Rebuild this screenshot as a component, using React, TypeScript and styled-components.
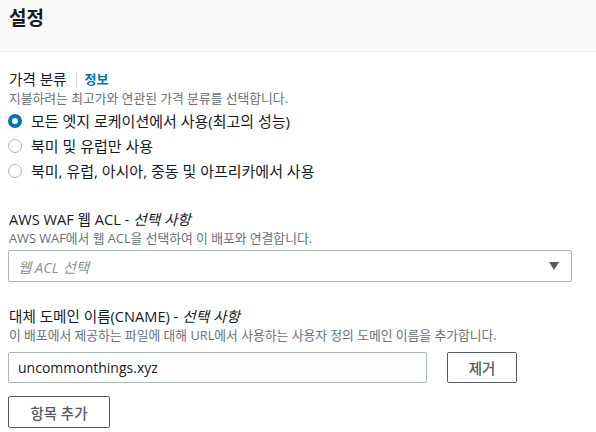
import React, { useState } from "react";
import styled, { createGlobalStyle } from "styled-components";

const GlobalStyle = createGlobalStyle`
  body {
    margin: 0;
    background: #ffffff;
    font-family: "Open Sans", "Noto Sans CJK KR", sans-serif;
    color: #16191f;
  }
`;

const Header = styled.header`
  height: 52px;
  box-sizing: border-box;
  background: #fafafa;
  border-bottom: 1px solid #e9ebed;
  padding: 5px 9px 0;
`;

const Title = styled.h2`
  margin: 0;
  font-size: 19px;
  line-height: 26px;
  font-weight: 700;
  color: #16191f;
`;

const Body = styled.div`
  padding: 18px 8px 0 8px;
  width: 564px;
`;

const Field = styled.div<{ gap?: number }>`
  margin-top: ${({ gap }) => gap ?? 0}px;
`;

const Label = styled.div`
  display: flex;
  align-items: center;
  padding-left: 1px;
  font-size: 14.6px;
  line-height: 19px;
  color: #16191f;
`;

const Optional = styled.i`
  margin-left: 4px;
  font-style: italic;
`;

const InfoLink = styled.a`
  display: flex;
  align-items: center;
  margin-left: 9px;
  padding-left: 8px;
  height: 16px;
  border-left: 1px solid #d5dbdb;
  color: #0073bb;
  font-weight: 700;
  font-size: 13px;
  text-decoration: none;
`;

const Description = styled.div`
  padding-left: 1px;
  font-size: 12.8px;
  line-height: 18px;
  color: #687078;
`;

const RadioList = styled.div`
  padding-top: 1px;
`;

const RadioRow = styled.label`
  display: flex;
  align-items: center;
  height: 25px;
  font-size: 15px;
  color: #16191f;
  cursor: pointer;
`;

const RadioDot = styled.span<{ checked: boolean }>`
  width: 14px;
  height: 14px;
  box-sizing: border-box;
  border-radius: 50%;
  margin-right: 9px;
  background: #fff;
  border: ${({ checked }) => (checked ? "4px solid #0073bb" : "1px solid #aab7b8")};
`;

const SelectBox = styled.div`
  margin-top: 3px;
  height: 32px;
  box-sizing: border-box;
  border: 1px solid #aab7b8;
  border-radius: 2px;
  display: flex;
  align-items: center;
  justify-content: space-between;
  padding: 0 12px 0 9px;
`;

const Placeholder = styled.span`
  font-style: italic;
  font-size: 14.5px;
  color: #879596;
`;

const Caret = styled.svg`
  width: 10px;
  height: 8px;
`;

const InputRow = styled.div`
  display: flex;
  align-items: center;
  gap: 20px;
  margin-top: 8px;
`;

const TextInput = styled.input`
  width: 419px;
  height: 31px;
  box-sizing: border-box;
  border: 1px solid #aab7b8;
  border-radius: 2px;
  padding: 0 9px;
  font-family: "Open Sans", "Noto Sans CJK KR", sans-serif;
  font-size: 14px;
  color: #16191f;
  outline: none;
`;

const Button = styled.button<{ w: number }>`
  width: ${({ w }) => w}px;
  height: 31px;
  box-sizing: border-box;
  background: #fff;
  border: 1px solid #545b64;
  border-radius: 2px;
  font-family: "Open Sans", "Noto Sans CJK KR", sans-serif;
  font-size: 14.5px;
  font-weight: 500;
  color: #545b64;
  cursor: pointer;
`;

const AddButton = styled(Button)`
  display: block;
  margin-top: 13px;
  height: 32px;
`;

const options = [
  "모든 엣지 로케이션에서 사용(최고의 성능)",
  "북미 및 유럽만 사용",
  "북미, 유럽, 아시아, 중동 및 아프리카에서 사용",
];

export default function App() {
  const [price, setPrice] = useState(0);
  const [domain, setDomain] = useState("uncommonthings.xyz");

  return (
    <>
      <GlobalStyle />
      <Header>
        <Title>설정</Title>
      </Header>
      <Body>
        <Field>
          <Label>
            가격 분류
            <InfoLink href="#">정보</InfoLink>
          </Label>
          <Description>지불하려는 최고가와 연관된 가격 분류를 선택합니다.</Description>
          <RadioList>
            {options.map((o, i) => (
              <RadioRow key={o} onClick={() => setPrice(i)}>
                <RadioDot checked={price === i} />
                {o}
              </RadioRow>
            ))}
          </RadioList>
        </Field>

        <Field gap={27}>
          <Label>
            AWS WAF 웹 ACL -<Optional>선택 사항</Optional>
          </Label>
          <Description>AWS WAF에서 웹 ACL을 선택하여 이 배포와 연결합니다.</Description>
          <SelectBox>
            <Placeholder>웹 ACL 선택</Placeholder>
            <Caret viewBox="0 0 10 8">
              <path d="M0 0 H10 L5 8 Z" fill="#545b64" />
            </Caret>
          </SelectBox>
        </Field>

        <Field gap={25}>
          <Label>
            대체 도메인 이름(CNAME) -<Optional>선택 사항</Optional>
          </Label>
          <Description>
            이 배포에서 제공하는 파일에 대해 URL에서 사용하는 사용자 정의 도메인 이름을 추가합니다.
          </Description>
          <InputRow>
            <TextInput value={domain} onChange={(e) => setDomain(e.target.value)} />
            <Button w={70}>제거</Button>
          </InputRow>
          <AddButton w={102}>항목 추가</AddButton>
        </Field>
      </Body>
    </>
  );
}
